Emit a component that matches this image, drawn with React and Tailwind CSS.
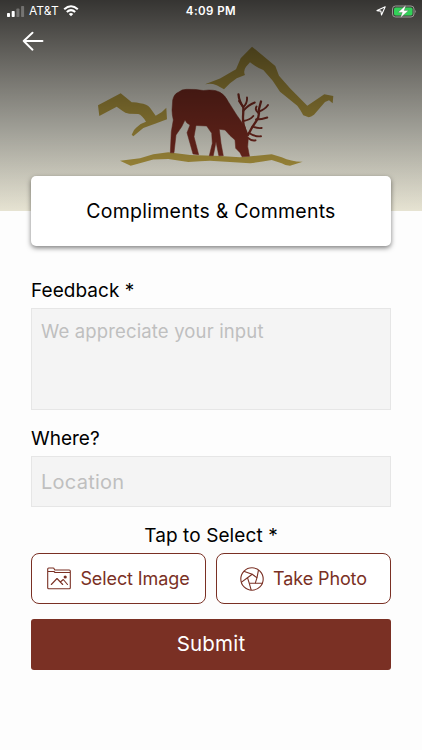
import React, { useState } from "react";

function ElkLogo() {
  return (
    <svg className="w-[238px] h-[124px]" viewBox="97 44 238 124" fill="none">
      <g fill="#b09840">
        <path d="M98 105.3L120.7 93.3L131.7 102.3Q136 102 140 103.3Q147 104 150 107.7L155.7 115.7Q162 113 166.3 107.7L167 119.3L155 123.7L143.3 128L133.3 136.3L131.7 134.7Q133 130 136.7 127.3Q141 123 146 121.7Q142 115 138.3 114L129.3 113.7Q125 113 122.3 110.7L116.7 106.7L99.3 116Z" />
        <path d="M205 84.3L220 78.5L236 69.3L240.7 58.3L252 46.7L275.3 66L279 75.7L290 88.3L307.3 105.7L324.3 94.3L333.3 96L332.7 103.3L329 100.3L325 102L314 114.7Q311 117 308.7 117.3L303.3 115.3Q300 109 297.3 105.7L280 91.7L272.7 80.7L263.3 70Q256 67 250 62.3L246 66.7Q243 71 245 75L236.7 78.3L230 83.3L224 89.3L216.7 85.3Q211 83 205 84.3Z" />
        <path d="M120 160.7L140 158.3L153.3 154.3L168.3 152.3L190 155L220 156L240 157.3L271.7 154.3L281.7 157.3Q292 162 302.7 161.7L290 165.7Q285 165.5 281.7 163.3L271.7 160Q260 162 250 163.3L230 162L210 160.8L200 161.300L188.3 162L168.3 158.9L153.3 159.5L130.7 165.7Z" />
      </g>
      <path
        d="M172.7 100Q174 94 178.3 92.3Q182 89 186.7 89.3Q195 89 203.3 90.5Q214 89 220 92.3Q225 95 228.3 101.7L236.7 115L245 126.7L248.3 138.3L247.7 146.7L249.5 156.3L242 156.7L240 152.7L235.7 148.3L235 140Q230 136 225 130L219.3 129.3L221 143.3L223.3 155.7L218.8 155.7L216 141.7L213.3 155.7L209.3 155.7L212.3 143.3L211.7 133.3L206.7 126L196 125.5L194 136.7L198.7 154.7L193 154L187 132.7L190 125Q186 123 185 120L181.7 126.7L176 135L174 152.8L170.3 152.8L171.3 131.7L173.3 120Q172 114 172 110Z"
        fill="#782b20"
        stroke="#782b20"
        strokeWidth=".5"
        strokeLinejoin="round"
      />
      {/* Antlers */}
      <g stroke="#782b20" strokeWidth="2.3" strokeLinecap="round" strokeLinejoin="round">
        <path d="M247 134Q242.500 125 243 117T243.300 107Q239 101 238.500 94.500" />
        <path d="M248 135Q252 127 256 121.500T258.700 110L261 101.500" />
      </g>
      <g stroke="#782b20" strokeWidth="1.900" strokeLinecap="round" strokeLinejoin="round">
        <path d="M243.300 107Q247.500 103 247 97.500M239 101L243 107M243.200 111Q248 105 254.800 102.500M243.500 121Q250 120 253.300 116" />
        <path d="M258.700 111.500Q265 109.500 268 105M256 119.500Q262 119.500 267.300 117.500M252.500 126.500Q257 128.500 261.700 128M249 133Q255 137 261 136.300M248 138Q252 141.300 255.500 140.300M258.300 113Q254.500 110 256.500 106.500" />
      </g>
    </svg>
  );
}

function StatusBar() {
  return (
    <div className="relative z-10 flex h-[22px] items-center justify-between pl-[7px] pr-[5px] text-white">
      <div className="flex w-[150px] items-center">
        <svg className="w-[18px] h-[11px]" viewBox="0 0 18 11" fill="#fff">
          <rect x="0" y="7" width="3" height="4" rx=".7" />
          <rect x="4.7" y="5" width="3" height="6" rx=".7" />
          <rect x="9.4" y="2.5" width="3" height="8.5" rx=".7" opacity=".28" />
          <rect x="14.1" y="0" width="3" height="11" rx=".7" opacity=".28" />
        </svg>
        <span className="ml-[4px] w-[30px] whitespace-nowrap text-[12px] tracking-[0.1px]">AT&amp;T</span>
        <svg className="ml-[4px] w-[16px] h-[12px]" viewBox="0 0 16 12" fill="none" stroke="#fff" strokeWidth="2.1">
          <path d="M1.2 4.2Q8 -1.7 14.8 4.2M3.8 7Q8 3.4 12.2 7" />
          <path d="M5.8 9Q8 7.2 10.2 9L8 11.3Z" fill="#fff" stroke="none" />
        </svg>
      </div>
      <span className="pt-px pr-[2px] text-[11.5px] font-semibold tracking-[0.45px]">4:09 PM</span>
      <div className="flex w-[150px] items-center justify-end gap-[6px]">
        <svg className="w-[10px] h-[10px]" viewBox="0 0 10 10" fill="none" stroke="#fff" strokeWidth="1.1" strokeLinejoin="round">
          <path d="M9.2 .8L5.5 9L4.9 5.1L1 4.6Z" />
        </svg>
        <svg className="w-[25px] h-[13px]" viewBox="0 0 25 13">
          <rect x=".5" y="1" width="21.5" height="11" rx="3" fill="none" stroke="#999994" />
          <rect x="2" y="2.5" width="18.5" height="8" rx="1.7" fill="#32d158" />
          <path d="M23.2 4.8Q25 6.5 23.2 8.2Z" fill="#999994" />
          <path d="M14 0L6 7.4H10.3L8.3 13L16.5 5.4H12.2Z" fill="#fff" stroke="#44443f" strokeWidth=".3" />
        </svg>
      </div>
    </div>
  );
}

function FolderImageIcon() {
  return (
    <svg className="w-[24px] h-[23px]" viewBox="0 0 24 23" fill="none" stroke="#7a3024" strokeWidth="1.1" strokeLinejoin="round" strokeLinecap="round">
      <path d="M.7 20.7V2Q.7 1 1.7 1H6Q7 1 7.3 2L7.8 3H22.3Q23.3 3 23.3 4V20.7Q23.3 21.7 22.3 21.7H1.7Q.7 21.7 .7 20.7ZM.7 4.5H7L8 5.5H23" />
      <path d="M4.3 17.5L10 11.5L15.7 17.5M13.3 15L16.3 12.5L20.5 17.5" />
      <circle cx="18.2" cy="10" r="1.6" fill="#7a3024" stroke="none" />
    </svg>
  );
}

function ApertureIcon() {
  return (
    <svg className="w-[24px] h-[24px]" viewBox="0 0 24 24" fill="none" stroke="#7a3024" strokeWidth="1.1" strokeLinejoin="round">
      <circle cx="12" cy="12" r="11.2" />
      <path d="M12.2 7.3L17 10.7L15.2 16.3H9.3L7.5 10.7Z" />
      <path d="M12.2 7.3L3.7 4.3M17 10.7L18.5 2.9M15.2 16.3L22.5 16.2M9.3 16.3L11.2 23.1M7.5 10.7L1.2 15.4" />
    </svg>
  );
}

export default function App() {
  const [feedback, setFeedback] = useState("");
  const [location, setLocation] = useState("");

  return (
    <div className="h-[750px] w-full overflow-hidden bg-[#fdfdfd] font-['Inter',sans-serif] text-black">
      {/* Header */}
      <header className="relative h-[211px] bg-linear-to-b from-[#e8e3d9] via-[#e3e2d6] via-60% to-[#e6e3d2]">
        <div className="absolute inset-0 z-[5] bg-linear-to-b from-black/77 to-black/0"></div>
        <StatusBar />
        <button className="relative z-10 ml-[22px] mt-[9px] block h-[20px] w-[22px]" aria-label="Back">
          <svg viewBox="0 0 22 20" fill="none" stroke="#fff" strokeWidth="1.9" strokeLinecap="round" strokeLinejoin="round">
            <path d="M10.5 1.7L1.7 10L10.5 18.7M1.7 10H20.5" />
          </svg>
        </button>
        <div className="-mt-[7px] ml-[97px]">
          <ElkLogo />
        </div>
      </header>

      <main className="px-[31px]">
        {/* Title card */}
        <div className="relative z-10 -mt-[35px] flex h-[70px] items-center justify-center rounded-[5px] bg-white shadow-[0_2px_5px_rgba(0,0,0,0.5)]">
          <h1 className="whitespace-nowrap pt-[2px] text-[19.5px] tracking-[0.25px]">Compliments &amp; Comments</h1>
        </div>

        {/* Form */}
        <form className="flex flex-col" onSubmit={(e) => e.preventDefault()}>
          <label htmlFor="feedback" className="mt-[31px] h-[28px] text-[19px] leading-[28px] tracking-[0.05px]">
            Feedback *
          </label>
          <textarea
            id="feedback"
            className="mt-[3px] h-[102px] resize-none border border-[#e6e6e6] bg-[#f4f4f4] px-[9px] py-[8px] text-[18.5px] leading-[28px] tracking-[0.15px] outline-none placeholder:text-[#bfbfbf]"
            placeholder="We appreciate your input"
            value={feedback}
            onChange={(e) => setFeedback(e.target.value)}
          />
          <label htmlFor="location" className="mt-[15px] h-[28px] text-[19px] leading-[28px]">
            Where?
          </label>
          <input
            id="location"
            className="mt-[3px] h-[51px] border border-[#e6e6e6] bg-[#f4f4f4] px-[9px] text-[20px] tracking-[0.25px] outline-none placeholder:text-[#bfbfbf]"
            placeholder="Location"
            value={location}
            onChange={(e) => setLocation(e.target.value)}
          />
          <p className="mt-[15px] h-[28px] text-center text-[19px] leading-[28px] tracking-[0.1px]">Tap to Select *</p>
          <div className="mt-[3px] grid grid-cols-2 gap-[10px] text-[18px] tracking-[-0.1px] text-[#7a3024]">
            <button type="button" className="flex h-[51px] items-center justify-center gap-[9px] whitespace-nowrap rounded-[8px] border border-[#7a3024] bg-white">
              <FolderImageIcon />
              <span>Select Image</span>
            </button>
            <button type="button" className="flex h-[51px] items-center justify-center gap-[9px] whitespace-nowrap rounded-[8px] border border-[#7a3024] bg-white">
              <ApertureIcon />
              <span>Take Photo</span>
            </button>
          </div>
          <button type="submit" className="mt-[15px] h-[51px] rounded-[3px] bg-[#7a3024] text-[20.5px] tracking-[0.2px] text-white">
            Submit
          </button>
        </form>
      </main>
    </div>
  );
}
